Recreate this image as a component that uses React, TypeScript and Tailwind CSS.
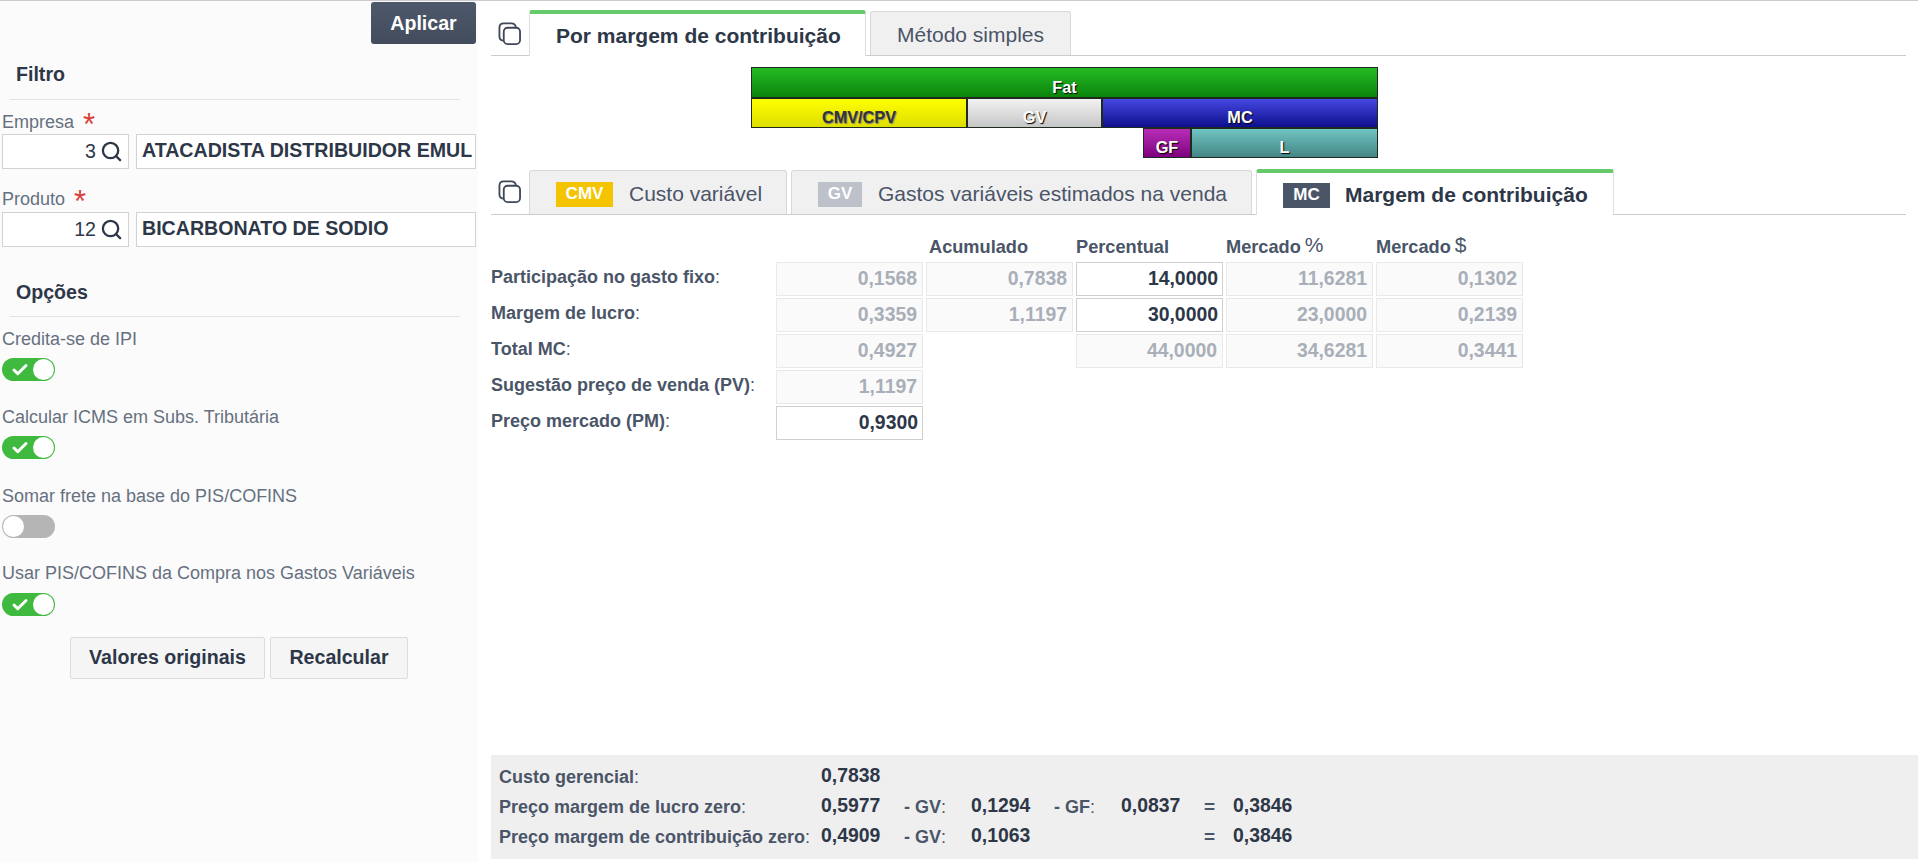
import { Search, Check } from "lucide-react";

const fontStack = "font-['Liberation_Sans',Arial,sans-serif]";

function CopyIcon({ cls }: { cls: string }) {
  return (
    <svg viewBox="0 0 24 24" className={cls} fill="none" stroke="#3f4858" strokeWidth="1.9" strokeLinecap="round" strokeLinejoin="round">
      <rect x="6" y="6" width="17" height="17" rx="4" />
      <path d="M5.5 19.5C3 19 1.5 17.5 1.5 15V6C1.5 3 3.3 1.5 6 1.5h8c2.5 0 4 1.2 4.5 3.5" />
    </svg>
  );
}

function SectionHead({ title, cls }: { title: string; cls: string }) {
  return (
    <div className={`${cls} mx-[10px] w-[450px] flex items-end border-b border-[#e3e3e3] pl-[6px] text-[19.6px] leading-[24px] font-bold text-[#2d3748]`}>
      {title}
    </div>
  );
}

function CodeField({ label, code, name, cls }: { label: string; code: string; name: string; cls: string }) {
  return (
    <>
      <div className={`${cls} pl-[2px] flex items-end text-[18px] leading-[20px] text-[#667080]`}>
        {label}
        <span className="ml-[9px] text-[#d9403a] text-[31px] leading-[20px] h-[20px] relative top-[3px]">*</span>
      </div>
      <div className="flex gap-[7px] px-[2px] h-[35px]">
        <div className="w-[127px] bg-white border border-[#d2d2d2] flex items-center justify-end pr-[5px] gap-[4px] text-[19.6px] text-[#2d3748]">
          <span>{code}</span>
          <Search size={23} strokeWidth={2.4} color="#2d3748" />
        </div>
        <div className="w-[340px] bg-white border border-[#d2d2d2] flex items-center pl-[5px] pb-[1px] overflow-hidden whitespace-nowrap text-[19.6px] font-bold text-[#2d3748]">
          {name}
        </div>
      </div>
    </>
  );
}

function Toggle({ on }: { on: boolean }) {
  return on ? (
    <div className="w-[53px] h-[23px] rounded-full bg-[#3fba3f] flex items-center justify-between pl-[9px] pr-[1px]">
      <Check size={18} strokeWidth={4} color="#fff" />
      <div className="w-[21px] h-[21px] rounded-full bg-white" />
    </div>
  ) : (
    <div className="w-[53px] h-[23px] rounded-full bg-[#b5b5b5] flex items-center pl-[1px]">
      <div className="w-[21px] h-[21px] rounded-full bg-white" />
    </div>
  );
}

function Option({ label, on, top, gap }: { label: string; on: boolean; top: string; gap: string }) {
  return (
    <div className={`${top} pl-[2px]`}>
      <div className="text-[18px] leading-[20px] text-[#667080]">{label}</div>
      <div className={gap}>
        <Toggle on={on} />
      </div>
    </div>
  );
}

function Btn({ w, children }: { w: string; children: string }) {
  return (
    <div className={`${w} h-[42px] flex items-center justify-center rounded-[2px] bg-[#f5f5f5] border border-[#dcdcdc] text-[19.6px] font-bold text-[#2d3748]`}>
      {children}
    </div>
  );
}

function Badge({ w, bg, children }: { w: string; bg: string; children: string }) {
  return (
    <span className={`${w} ${bg} h-[25px] flex items-center justify-center text-white font-bold text-[17px]`}>{children}</span>
  );
}

function Seg({ w, cls, text, tc }: { w: string; cls: string; text: string; tc: string }) {
  return (
    <div className={`${w} ${cls} ${tc} h-full border border-[#1e2a1e] flex items-end justify-center pb-[2px] text-[16.3px] leading-[16px] font-bold`}>
      {text}
    </div>
  );
}

function Lab({ text }: { text: string }) {
  return (
    <div className="pb-[4px] flex items-center text-[18px] leading-[20px] font-bold text-[#4a5568] whitespace-nowrap">
      {text}
      <span className="font-normal">:</span>
    </div>
  );
}

function Ro({ v }: { v: string }) {
  return (
    <div className="h-[34px] flex items-center justify-end pr-[5px] bg-[#fafafa] border border-[#e9e9e9] text-[19.4px] font-bold text-[#a9afb8]">{v}</div>
  );
}

function Ed({ v }: { v: string }) {
  return (
    <div className="h-[34px] flex items-center justify-end pr-[4px] bg-white border border-[#cfcfcf] text-[19.4px] font-bold text-[#2d3748]">{v}</div>
  );
}

function Hd({ text, sym, cls }: { text: string; sym?: string; cls?: string }) {
  return (
    <div className={`${cls ?? ""} h-[45px] flex items-end pb-[2px] text-[18.2px] leading-[22px] font-bold text-[#4a5568] whitespace-nowrap`}>
      {text}
      {sym && <span className="ml-[4px] font-normal text-[21px] relative -top-[2px]">{sym}</span>}
    </div>
  );
}

function BL({ text }: { text: string }) {
  return (
    <div className="pt-[3px] text-[18px] font-bold text-[#4a5568] whitespace-nowrap">
      {text}
      <span className="font-normal">:</span>
    </div>
  );
}

function BV({ v }: { v: string }) {
  return <div className="-ml-px text-[19.4px] font-bold text-[#2d3748]">{v}</div>;
}

function Foot({ rows }: { rows: string[][] }) {
  return (
    <div className="mt-auto mb-[3px] ml-[13px] h-[104px] pt-[6px] pl-[8px] bg-[#f0efef] grid grid-cols-[323px_82px_68px_82px_68px_82px_30px_100px] auto-rows-[30px] items-center">
      {rows.map((r) =>
        r.map((c, i) => {
          if (c === "") return <div key={r[0] + i} />;
          if (i === 0 || i === 2 || i === 4) return <BL key={r[0] + i} text={c} />;
          if (i === 6) return <div key={r[0] + i} className="pt-[2px] text-[19px] font-bold text-[#4a5568]">=</div>;
          return <BV key={r[0] + i} v={c} />;
        })
      )}
    </div>
  );
}

export default function App() {
  return (
    <div className={`${fontStack} w-[1918px] h-[862px] overflow-hidden bg-white flex border-t border-[#cccccc]`}>
      <aside className="w-[478px] h-full shrink-0 bg-[#fbfbfb] flex flex-col">
        <div className="mt-[1px] mr-[2px] self-end w-[105px] h-[42px] pt-[1px] rounded-[3px] bg-gradient-to-b from-[#4d586b] to-[#424c5c] flex items-center justify-center text-white text-[19.6px] font-bold">
          Aplicar
        </div>
        <SectionHead title="Filtro" cls="h-[56px] pb-[13px]" />
        <CodeField label="Empresa" code="3" name="ATACADISTA DISTRIBUIDOR EMUL" cls="h-[34px] pb-[2px]" />
        <CodeField label="Produto" code="12" name="BICARBONATO DE SODIO" cls="h-[43px] pb-[3px]" />
        <SectionHead title="Opções" cls="h-[70px] pb-[12px]" />
        <Option label="Credita-se de IPI" on top="mt-[12px]" gap="mt-[9px]" />
        <Option label="Calcular ICMS em Subs. Tributária" on top="mt-[26px]" gap="mt-[9px]" />
        <Option label="Somar frete na base do PIS/COFINS" on={false} top="mt-[27px]" gap="mt-[9px]" />
        <Option label="Usar PIS/COFINS da Compra nos Gastos Variáveis" on top="mt-[25px]" gap="mt-[10px]" />
        <div className="mt-[21px] flex justify-center gap-[5px]">
          <Btn w="w-[195px]">Valores originais</Btn>
          <Btn w="w-[138px]">Recalcular</Btn>
        </div>
      </aside>

      <main className="flex-1 h-full flex flex-col min-w-0">
        <div className="ml-[13px] mr-[12px] h-[55px] flex items-end border-b border-[#cccccc] shrink-0">
          <CopyIcon cls="w-[23px] h-[23px] ml-[7px] self-start mt-[21px]" />
          <div className="ml-[8px] -mb-px w-[337px] h-[46px] flex items-center pl-[26px] pt-[2px] bg-white border-x border-[#dddddd] border-t-4 border-t-[#66c96a] rounded-t-[3px] text-[21px] font-bold text-[#2d3748]">
            Por margem de contribuição
          </div>
          <div className="ml-[4px] w-[201px] h-[44px] flex items-center justify-center pt-[3px] bg-[#f1f0f0] border border-b-0 border-[#d8d8d8] rounded-t-[3px] text-[21px] text-[#4a5568]">
            Método simples
          </div>
        </div>

        <div className="mt-[11px] ml-[273px] w-[627px] h-[91px] flex flex-col shrink-0">
          <div className="h-[31px] flex">
            <Seg w="w-full" cls="bg-gradient-to-b from-[#24bb24] to-[#0a840a]" tc="text-white [text-shadow:1px_1px_1px_#000]" text="Fat" />
          </div>
          <div className="h-[30px] flex">
            <Seg w="w-[216px]" cls="bg-gradient-to-b from-[#ffff00] to-[#dede00]" tc="text-[#333] [text-shadow:1px_1px_1px_#777]" text="CMV/CPV" />
            <Seg w="w-[135px]" cls="bg-gradient-to-b from-[#f2f2f2] to-[#c6c6c6]" tc="text-white [text-shadow:1px_1px_1px_#000]" text="GV" />
            <Seg w="w-[276px]" cls="bg-gradient-to-b from-[#4646e2] to-[#0e0e8c]" tc="text-white [text-shadow:1px_1px_1px_#000]" text="MC" />
          </div>
          <div className="h-[30px] flex pl-[392px]">
            <Seg w="w-[48px]" cls="bg-gradient-to-b from-[#b82cb8] to-[#7f007f]" tc="text-white [text-shadow:1px_1px_1px_#000]" text="GF" />
            <Seg w="w-[187px]" cls="bg-gradient-to-b from-[#70c6c2] to-[#458686]" tc="text-white [text-shadow:1px_1px_1px_#000]" text="L" />
          </div>
        </div>

        <div className="ml-[13px] mr-[12px] h-[57px] flex items-end border-b border-[#cccccc] shrink-0">
          <CopyIcon cls="w-[23px] h-[23px] ml-[7px] self-start mt-[22px]" />
          <div className="ml-[8px] w-[258px] h-[44px] flex items-center pl-[26px] pt-[3px] bg-[#f1f0f0] border border-b-0 border-[#d8d8d8] rounded-t-[3px] text-[21px] text-[#4a5568]">
            <Badge w="w-[57px]" bg="bg-[#f5c400]">CMV</Badge>
            <span className="ml-[16px]">Custo variável</span>
          </div>
          <div className="ml-[4px] w-[461px] h-[44px] flex items-center pl-[26px] pt-[3px] bg-[#f1f0f0] border border-b-0 border-[#d8d8d8] rounded-t-[3px] text-[21px] text-[#4a5568]">
            <Badge w="w-[44px]" bg="bg-[#bcc1ca]">GV</Badge>
            <span className="ml-[16px]">Gastos variáveis estimados na venda</span>
          </div>
          <div className="ml-[4px] -mb-px w-[358px] h-[46px] flex items-center pl-[26px] pt-[2px] bg-white border-x border-[#dddddd] border-t-4 border-t-[#66c96a] rounded-t-[3px] text-[21px] font-bold text-[#2d3748]">
            <Badge w="w-[47px]" bg="bg-[#4a5568]">MC</Badge>
            <span className="ml-[15px]">Margem de contribuição</span>
          </div>
        </div>

        <div className="ml-[13px] grid grid-cols-[282px_147px_147px_147px_147px_147px] gap-x-[3px] gap-y-[2px] w-fit">
          <div />
          <div />
          <Hd text="Acumulado" cls="pl-[3px]" />
          <Hd text="Percentual" />
          <Hd text="Mercado" sym="%" />
          <Hd text="Mercado" sym="$" />

          <Lab text="Participação no gasto fixo" />
          <Ro v="0,1568" />
          <Ro v="0,7838" />
          <Ed v="14,0000" />
          <Ro v="11,6281" />
          <Ro v="0,1302" />

          <Lab text="Margem de lucro" />
          <Ro v="0,3359" />
          <Ro v="1,1197" />
          <Ed v="30,0000" />
          <Ro v="23,0000" />
          <Ro v="0,2139" />

          <Lab text="Total MC" />
          <Ro v="0,4927" />
          <div />
          <Ro v="44,0000" />
          <Ro v="34,6281" />
          <Ro v="0,3441" />

          <Lab text="Sugestão preço de venda (PV)" />
          <Ro v="1,1197" />
          <div />
          <div />
          <div />
          <div />

          <Lab text="Preço mercado (PM)" />
          <Ed v="0,9300" />
          <div />
          <div />
          <div />
          <div />
        </div>

        <Foot
          rows={[
            ["Custo gerencial", "0,7838", "", "", "", "", "", ""],
            ["Preço margem de lucro zero", "0,5977", "- GV", "0,1294", "- GF", "0,0837", "=", "0,3846"],
            ["Preço margem de contribuição zero", "0,4909", "- GV", "0,1063", "", "", "=", "0,3846"],
          ]}
        />
      </main>
    </div>
  );
}
